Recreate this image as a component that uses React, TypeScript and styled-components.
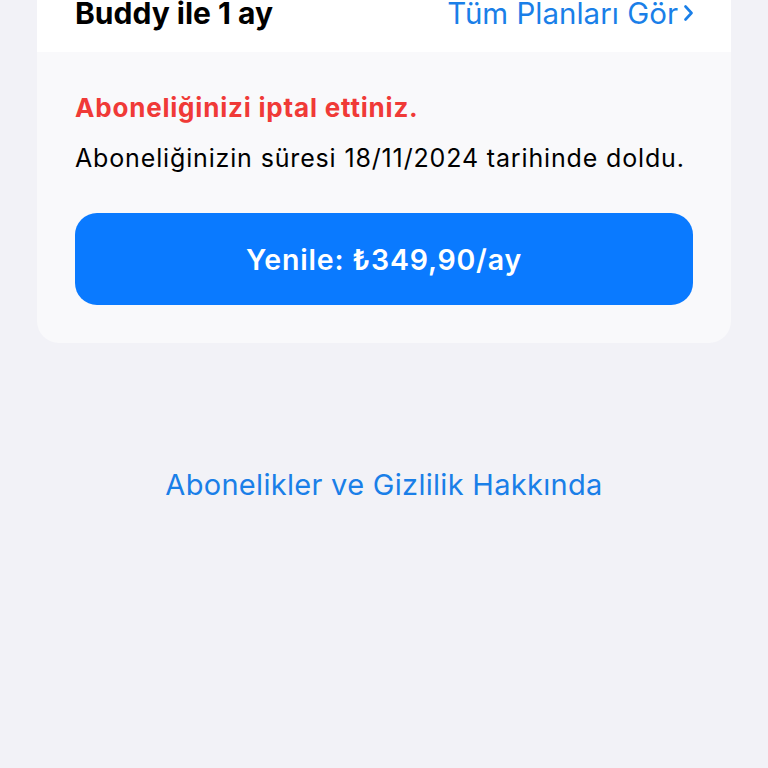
import React from "react";
import styled, { createGlobalStyle } from "styled-components";

const Global = createGlobalStyle`
  html, body { margin: 0; padding: 0; background: #f2f2f7; }
  body { font-family: Inter, "Noto Sans", sans-serif; -webkit-font-smoothing: antialiased; }
  #root { height: 768px; overflow: hidden; }
`;

const Page = styled.div`
  height: 768px;
  background: #f2f2f7;
  display: flex;
  flex-direction: column;
  align-items: center;
`;

const Card = styled.div`
  width: 694px;
  margin-top: -20px;
  border-radius: 0 0 22px 22px;
  background: #f9f9fb;
  overflow: hidden;
  display: flex;
  flex-direction: column;
`;

const Header = styled.div`
  height: 72px;
  background: #ffffff;
  display: flex;
  align-items: flex-start;
  justify-content: space-between;
  padding: 15px 38px 0 38px;
  box-sizing: border-box;
`;

const Title = styled.div`
  font-size: 30px;
  font-weight: 700;
  color: #000;
  line-height: 36px;
`;

const PlansLink = styled.div`
  font-size: 29.5px;
  font-weight: 400;
  color: #1a7fe8;
  line-height: 36px;
  display: flex;
  align-items: center;
  gap: 6px;
`;

const Body = styled.div`
  display: flex;
  flex-direction: column;
  padding: 40px 38px 38px 38px;
`;

const Cancelled = styled.div`
  font-size: 26px;
  font-weight: 700;
  color: #f03a37;
  letter-spacing: 0.8px;
  line-height: 32px;
`;

const Expiry = styled.div`
  margin-top: 18px;
  font-size: 25px;
  font-weight: 400;
  color: #000;
  letter-spacing: 0.85px;
  line-height: 32px;
`;

const RenewButton = styled.button`
  margin-top: 39px;
  height: 92px;
  border: none;
  border-radius: 22px;
  background: #0a7aff;
  color: #fff;
  font-family: inherit;
  font-size: 28.5px;
  font-weight: 600;
  letter-spacing: 0.8px;
  display: flex;
  align-items: center;
  justify-content: center;
  padding: 0;
`;

const Footer = styled.div`
  margin-top: 124px;
  font-size: 29px;
  font-weight: 400;
  color: #1a7fe8;
  letter-spacing: 0.3px;
  line-height: 36px;
`;

const Chevron = () => (
  <svg width="9" height="16" viewBox="0 0 9 16" fill="none">
    <path d="M1.5 1.5l6 6.5-6 6.5" stroke="#1a7fe8" strokeWidth="2.6" strokeLinecap="round" strokeLinejoin="round" />
  </svg>
);

export default function App() {
  return (
    <Page>
      <Global />
      <Card>
        <Header>
          <Title>Buddy ile 1 ay</Title>
          <PlansLink>
            Tüm Planları Gör <Chevron />
          </PlansLink>
        </Header>
        <Body>
          <Cancelled>Aboneliğinizi iptal ettiniz.</Cancelled>
          <Expiry>Aboneliğinizin süresi 18/11/2024 tarihinde doldu.</Expiry>
          <RenewButton>Yenile: ₺349,90/ay</RenewButton>
        </Body>
      </Card>
      <Footer>Abonelikler ve Gizlilik Hakkında</Footer>
    </Page>
  );
}
